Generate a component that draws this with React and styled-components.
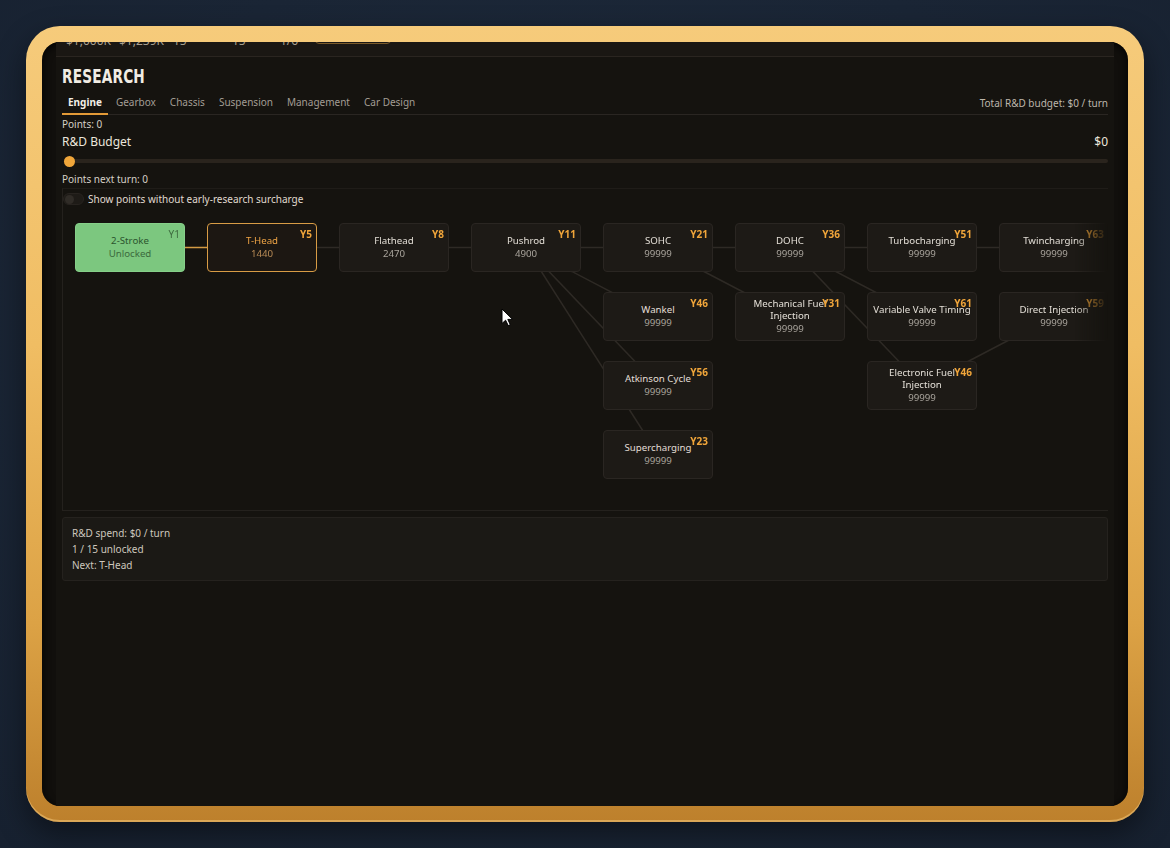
import React from 'react';
import styled, { createGlobalStyle } from 'styled-components';

const GlobalStyle = createGlobalStyle`
    html, body {
        margin: 0;
        padding: 0;
        height: 100%;
    }
    body {
        background: radial-gradient(ellipse at 50% 40%, #1d2a3b 0%, #1a2535 60%, #172130 100%);
        font-family: 'Noto Sans', 'Open Sans', sans-serif;
        overflow: hidden;
    }
`;

const Page = styled.div`
    align-items: center;
    display: flex;
    height: 100vh;
    justify-content: center;
`;

const Bezel = styled.div`
    background: linear-gradient(180deg, #f6cb7b 0%, #f0bd63 40%, #dca245 75%, #bd802c 100%);
    border-radius: 34px;
    box-shadow: 0 12px 30px rgba(0,0,0,0.45), inset 0 -2px 0 rgba(255,214,140,0.45);
    box-sizing: border-box;
    height: 796px;
    padding: 16px;
    width: 1118px;
`;

const Screen = styled.div`
    background: #110f0c;
    border-radius: 18px;
    box-shadow: inset 0 2px 8px rgba(0,0,0,0.9);
    box-sizing: border-box;
    height: 100%;
    overflow: hidden;
    padding: 0 14px;
`;

const Content = styled.div`
    background: #15130f;
    display: flex;
    flex-direction: column;
    height: 100%;
`;

const Stats = styled.div`
    align-items: center;
    background: #1a1713;
    border-bottom: 1px solid #2a2520;
    color: #a89f8f;
    display: grid;
    flex-shrink: 0;
    font-size: 12px;
    grid-template-columns: 53px 54px 59px 48px 35px 76px;
    height: 32px;
    margin-top: -18px;
    padding: 0 10px;
`;

const StatButton = styled.div`
    align-self: start;
    border: 1px solid #7a5a2a;
    border-radius: 4px;
    box-sizing: border-box;
    height: 20px;
`;

const Body = styled.div`
    display: flex;
    flex-direction: column;
    padding: 0 6px;
`;

const Heading = styled.h1`
    color: #f1ece3;
    font-family: 'DejaVu Sans Condensed', 'DejaVu Sans', sans-serif;
    font-size: 19px;
    font-weight: 700;
    letter-spacing: 0.2px;
    line-height: 24px;
    margin: 7px 0 0;
    transform: scaleX(0.8);
    transform-origin: left center;
`;

const TabBar = styled.div`
    border-bottom: 1px solid #2a2622;
    display: flex;
    gap: 2px;
    height: 23px;
    margin-top: 3px;
`;

const Tab = styled.div`
    align-items: center;
    border-bottom: 2px solid ${p => (p.$active ? '#e39a37' : 'transparent')};
    color: ${p => (p.$active ? '#f3eee6' : '#a39d94')};
    display: flex;
    font-size: 10px;
    font-weight: ${p => (p.$active ? 700 : 400)};
    margin-bottom: -1px;
    padding: 0 6px;
`;

const BudgetTotal = styled.div`
    align-self: center;
    color: #bdb6ab;
    font-size: 10px;
    margin-left: auto;
`;

const Info = styled.div`
    color: #d6d0c6;
    font-size: 10px;
    line-height: 14px;
    margin-top: ${p => p.$mt || 0}px;
`;

const BudgetRow = styled.div`
    color: #ece6dc;
    display: flex;
    font-size: 12px;
    justify-content: space-between;
    line-height: 16px;
    margin-top: 3px;
`;

const Slider = styled.div`
    height: 12px;
    margin-top: 5px;
    position: relative;
`;

const Track = styled.div`
    background: #2a241d;
    border-radius: 2px;
    height: 4px;
    left: 2px;
    position: absolute;
    right: 0;
    top: 4px;
`;

const Thumb = styled.div`
    background: #f0a63a;
    border-radius: 50%;
    height: 11px;
    left: 2px;
    position: absolute;
    top: 0.5px;
    width: 11px;
`;

const TreeBox = styled.div`
    background: #15130f;
    border-bottom: 1px solid #24211d;
    border-left: 1px solid #24211d;
    border-top: 1px solid #1f1c18;
    margin-top: 2px;
`;

const ToggleRow = styled.div`
    align-items: center;
    color: #e0dad0;
    display: flex;
    font-size: 10px;
    gap: 4px;
    line-height: 12px;
    padding: 4px 0;
`;

const Toggle = styled.div`
    background: #1e1b17;
    border: 1px solid #27231f;
    border-radius: 6px;
    box-sizing: border-box;
    height: 12px;
    position: relative;
    width: 21px;

    &::after {
        background: #302c27;
        border-radius: 50%;
        content: '';
        height: 9px;
        left: 1px;
        position: absolute;
        top: 0.5px;
        width: 9px;
    }
`;

const Canvas = styled.div`
    height: 301px;
    mask-image: linear-gradient(to right, #000 calc(100% - 34px), transparent 100%);
    overflow: hidden;
    position: relative;
`;

const Lines = styled.svg`
    height: 100%;
    left: 0;
    position: absolute;
    top: 0;
    width: 100%;
`;

const nodeColors = {
    unlocked: { bg: '#7cc77f', border: '#86cf89', name: '#2b552e', value: '#3b6a3d', year: '#3d6b3f' },
    next: { bg: '#1c1712', border: '#d89c45', name: '#eea445', value: '#b78a55', year: '#f0a53a' },
    locked: { bg: '#1d1a16', border: '#2a2622', name: '#e3ded6', value: '#a9a49c', year: '#f0a53a' },
};

const Node = styled.div`
    align-items: center;
    background: ${p => nodeColors[p.$state].bg};
    border: 1px solid ${p => nodeColors[p.$state].border};
    border-radius: 4px;
    box-sizing: border-box;
    display: flex;
    flex-direction: column;
    height: 49px;
    justify-content: center;
    padding: 0 3px;
    position: absolute;
    text-align: center;
    width: 110px;
`;

const NodeName = styled.div`
    color: ${p => nodeColors[p.$state].name};
    font-size: 9.7px;
    line-height: 12px;
`;

const NodeValue = styled.div`
    color: ${p => nodeColors[p.$state].value};
    font-size: 9.7px;
    line-height: 13px;
`;

const Year = styled.span`
    color: ${p => nodeColors[p.$state].year};
    font-size: 10px;
    font-weight: ${p => (p.$state === 'unlocked' ? 400 : 700)};
    line-height: 12px;
    position: absolute;
    right: 4px;
    top: 4px;
`;

const Summary = styled.div`
    background: #1b1915;
    border: 1px solid #25221e;
    border-radius: 3px;
    color: #cdc7bd;
    font-size: 10px;
    line-height: 16px;
    margin-top: 6px;
    padding: 7px 9px;
`;

const Cursor = styled.svg`
    left: 501px;
    pointer-events: none;
    position: fixed;
    top: 308px;
`;

const tabs = ['Engine', 'Gearbox', 'Chassis', 'Suspension', 'Management', 'Car Design'];

const nodes = {
    twoStroke: { name: '2-Stroke', value: 'Unlocked', year: 'Y1', c: 0, r: 0, state: 'unlocked' },
    tHead: { name: 'T-Head', value: '1440', year: 'Y5', c: 1, r: 0, state: 'next' },
    flathead: { name: 'Flathead', value: '2470', year: 'Y8', c: 2, r: 0 },
    pushrod: { name: 'Pushrod', value: '4900', year: 'Y11', c: 3, r: 0 },
    sohc: { name: 'SOHC', value: '99999', year: 'Y21', c: 4, r: 0 },
    dohc: { name: 'DOHC', value: '99999', year: 'Y36', c: 5, r: 0 },
    turbo: { name: 'Turbocharging', value: '99999', year: 'Y51', c: 6, r: 0 },
    twin: { name: 'Twincharging', value: '99999', year: 'Y63', c: 7, r: 0 },
    wankel: { name: 'Wankel', value: '99999', year: 'Y46', c: 4, r: 1 },
    mfi: { name: 'Mechanical Fuel Injection', value: '99999', year: 'Y31', c: 5, r: 1 },
    vvt: { name: 'Variable Valve Timing', value: '99999', year: 'Y61', c: 6, r: 1 },
    di: { name: 'Direct Injection', value: '99999', year: 'Y59', c: 7, r: 1 },
    atkinson: { name: 'Atkinson Cycle', value: '99999', year: 'Y56', c: 4, r: 2 },
    efi: { name: 'Electronic Fuel Injection', value: '99999', year: 'Y46', c: 6, r: 2 },
    super: { name: 'Supercharging', value: '99999', year: 'Y23', c: 4, r: 3 },
};

const edges = [
    ['twoStroke', 'tHead', true],
    ['tHead', 'flathead'],
    ['flathead', 'pushrod'],
    ['pushrod', 'sohc'],
    ['sohc', 'dohc'],
    ['dohc', 'turbo'],
    ['turbo', 'twin'],
    ['pushrod', 'wankel'],
    ['pushrod', 'atkinson'],
    ['pushrod', 'super'],
    ['sohc', 'mfi'],
    ['dohc', 'vvt'],
    ['dohc', 'efi'],
    ['di', 'efi'],
];

const COL = 132;
const ROW = 69;
const left = n => 12 + n.c * COL;
const top = n => 14 + n.r * ROW;

const App = () => {
    return (
        <Page>
            <GlobalStyle />
            <Bezel>
                <Screen>
                    <Content>
                        <Stats>
                            <span>$1,000K</span>
                            <span>$1,239K</span>
                            <span>15</span>
                            <span>15</span>
                            <span>1/6</span>
                            <StatButton />
                        </Stats>

                        <Body>
                            <Heading>RESEARCH</Heading>

                            <TabBar>
                                {tabs.map((t, i) => (
                                    <Tab key={t} $active={i === 0}>{t}</Tab>
                                ))}
                                <BudgetTotal>Total R&amp;D budget: $0 / turn</BudgetTotal>
                            </TabBar>

                            <Info $mt={2}>Points: 0</Info>
                            <BudgetRow>
                                <span>R&amp;D Budget</span>
                                <span>$0</span>
                            </BudgetRow>
                            <Slider>
                                <Track />
                                <Thumb />
                            </Slider>
                            <Info $mt={5}>Points next turn: 0</Info>

                            <TreeBox>
                                <ToggleRow>
                                    <Toggle />
                                    Show points without early-research surcharge
                                </ToggleRow>
                                <Canvas>
                                    <Lines>
                                        {edges.map(([a, b, active]) => {
                                            const na = nodes[a];
                                            const nb = nodes[b];
                                            return (
                                                <line
                                                    key={a + b}
                                                    x1={left(na) + 55}
                                                    y1={top(na) + 24.5}
                                                    x2={left(nb) + 55}
                                                    y2={top(nb) + 24.5}
                                                    stroke={active ? '#d39a44' : '#2e2a25'}
                                                    strokeWidth="1.5"
                                                />
                                            );
                                        })}
                                    </Lines>
                                    {Object.entries(nodes).map(([id, n]) => {
                                        const state = n.state || 'locked';
                                        return (
                                            <Node key={id} $state={state} style={{ left: left(n), top: top(n) }}>
                                                <NodeName $state={state}>{n.name}</NodeName>
                                                <NodeValue $state={state}>{n.value}</NodeValue>
                                                <Year $state={state}>{n.year}</Year>
                                            </Node>
                                        );
                                    })}
                                </Canvas>
                            </TreeBox>

                            <Summary>
                                <div>R&amp;D spend: $0 / turn</div>
                                <div>1 / 15 unlocked</div>
                                <div>Next: T-Head</div>
                            </Summary>
                        </Body>
                    </Content>
                </Screen>
            </Bezel>
            <Cursor width="13" height="19" viewBox="0 0 13 19">
                <path d="M1 1 L1 15.5 L4.6 12.2 L7.2 17.6 L9.3 16.7 L6.8 11.4 L11.6 11.4 Z" fill="#fff" stroke="#000" strokeWidth="1" strokeLinejoin="round" />
            </Cursor>
        </Page>
    );
};

export default App;
